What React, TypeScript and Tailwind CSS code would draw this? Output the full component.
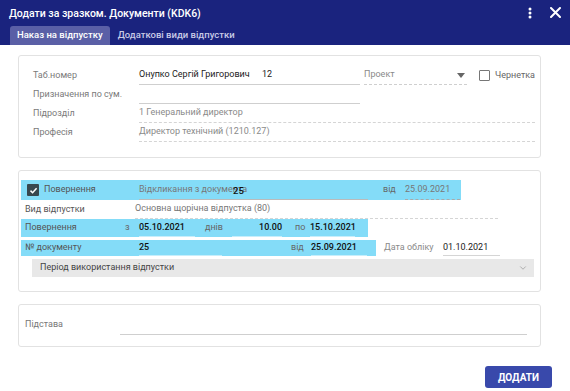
import { ChevronDown } from 'lucide-react'

const font = { fontFamily: 'Roboto, "Noto Sans", sans-serif' }

function Label({ children, w, className = '' }: { children: React.ReactNode; w: string; className?: string }) {
  return <div className={`${w} shrink-0 text-[9px] text-[#7a7a7a] ${className}`}>{children}</div>
}

export default function App() {
  return (
    <div className="w-[570px] h-[391px] bg-white overflow-hidden flex flex-col" style={font}>
      {/* шапка */}
      <div className="bg-[#1a237e] h-[45px] flex flex-col shrink-0">
        <div className="flex items-center h-[25px] pl-[9px] pr-[8px]">
          <div className="text-white text-[10.5px] font-medium flex-1 pt-[2px]">Додати за зразком. Документи (KDK6)</div>
          <svg width="4" height="12" viewBox="0 0 4 12" className="mr-[18px] mt-[1px]">
            <circle cx="2" cy="2" r="1.5" fill="white" />
            <circle cx="2" cy="6" r="1.5" fill="white" />
            <circle cx="2" cy="10" r="1.5" fill="white" />
          </svg>
          <svg width="11" height="11" viewBox="0 0 11 11" className="mr-[1px]">
            <path d="M1 1L10 10M10 1L1 10" stroke="white" strokeWidth="2" strokeLinecap="round" />
          </svg>
        </div>
        <div className="flex items-end h-[20px] pl-[10px]">
          <div className="h-[19px] px-[7px] flex items-center bg-[#5a5fa6] rounded-t-[3px] text-white text-[9.5px] font-medium">Наказ на відпустку</div>
          <div className="h-[19px] px-[8px] flex items-center text-[#c9cbe6] text-[9.5px] font-medium">Додаткові види відпустки</div>
        </div>
      </div>

      <div className="flex-1 flex flex-col px-[18px] pr-[29px] pt-[10px]">
        {/* картка 1 */}
        <div className="border border-[#e2e2e2] rounded-[3px] h-[103px] pt-[10px] pl-[14px] pr-[5px]">
          <div className="flex items-center h-[19px]">
            <Label w="w-[106px]">Таб.номер</Label>
            <div className="w-[221px] h-[19px] flex items-center border-b border-[#cfcfcf] text-[9px] text-[#222]">
              <span className="w-[123px] shrink-0">Онупко Сергій Григорович</span>
              <span>12</span>
            </div>
            <div className="ml-[4px] w-[103px] h-[19px] flex items-center border-b border-dashed border-[#cfcfcf] text-[9px] text-[#8a8a8a]">
              <span className="flex-1">Проект</span>
              <svg width="8" height="5" viewBox="0 0 8 5" className="mr-[2px]"><path d="M0 0H8L4 5Z" fill="#666" /></svg>
            </div>
            <div className="ml-[12px] w-[11px] h-[11px] border border-[#777] rounded-[1px]" />
            <span className="ml-[5px] text-[9px] text-[#666]">Чернетка</span>
          </div>
          <div className="flex items-center h-[19px]">
            <Label w="w-[106px]">Призначення по сум.</Label>
            <div className="w-[221px] h-[19px] border-b border-[#cfcfcf]" />
          </div>
          <div className="flex items-center h-[19px]">
            <Label w="w-[106px]">Підрозділ</Label>
            <div className="flex-1 h-[19px] flex items-center border-b border-dashed border-[#d5d5d5] text-[9px] text-[#8a8a8a]">1 Генеральний директор</div>
          </div>
          <div className="flex items-center h-[19px]">
            <Label w="w-[106px]">Професія</Label>
            <div className="flex-1 h-[19px] flex items-center border-b border-dashed border-[#d5d5d5] text-[9px] text-[#8a8a8a]">Директор технічний (1210.127)</div>
          </div>
        </div>

        {/* картка 2 */}
        <div className="mt-[12px] border border-[#e2e2e2] rounded-[3px] h-[122px] pt-[9px] pl-[2px] pr-[6px]">
          <div className="w-[440px] h-[20px] bg-[#84dcf8] flex items-center">
            <div className="ml-[6px] w-[12px] h-[12px] bg-[#37474f] rounded-[1px] flex items-center justify-center">
              <svg width="9" height="9" viewBox="0 0 9 9"><path d="M1.5 4.6L3.6 6.7L7.6 2.3" stroke="white" strokeWidth="1.5" fill="none" /></svg>
            </div>
            <Label w="w-[95px]" className="ml-[5px] text-[#555]">Повернення</Label>
            <div className="relative w-[229px] h-[20px] flex items-center border-b border-[#bbb] text-[9px] text-[#777] overflow-hidden whitespace-nowrap">
              Відкликання з документа
              <span className="absolute left-[94px] top-[4px] text-[9.5px] font-medium text-[#111]">25</span>
            </div>
            <Label w="w-[22px]" className="ml-[15px] text-[#666]">від</Label>
            <div className="w-[55px] h-[20px] flex items-center border-b border-dashed border-[#aaa] text-[9px] text-[#777]">25.09.2021</div>
          </div>
          <div className="flex items-center h-[19px]">
            <Label w="w-[114px]" className="pl-[4px] text-[#555]">Вид відпустки</Label>
            <div className="w-[363px] h-[19px] flex items-center border-b border-dashed border-[#d5d5d5] text-[9px] text-[#777]">Основна щорічна відпустка (80)</div>
          </div>
          <div className="w-[347px] h-[18px] bg-[#84dcf8] flex items-center text-[9px]">
            <Label w="w-[104px]" className="pl-[4px] text-[#555]">Повернення</Label>
            <span className="w-[14px] text-[#666]">з</span>
            <div className="w-[56px] h-[18px] flex items-center border-b border-[#c6eefb] font-medium text-[#111]">05.10.2021</div>
            <span className="ml-[10px] w-[27px] text-[#666]">днів</span>
            <div className="w-[50px] h-[18px] flex items-center justify-end border-b border-[#c6eefb] font-medium text-[#111]">10.00</div>
            <span className="ml-[13px] w-[15px] text-[#666]">по</span>
            <div className="w-[45px] h-[18px] flex items-center border-b border-[#c6eefb] font-medium text-[#111]">15.10.2021</div>
          </div>
          <div className="flex items-center mt-[3px] h-[16px] text-[9px]">
            <div className="w-[355px] h-[16px] bg-[#84dcf8] flex items-center">
              <Label w="w-[118px]" className="pl-[4px] text-[#555]">№ документу</Label>
              <div className="w-[83px] h-[16px] flex items-center border-b border-[#c6eefb] font-medium text-[#111]">25</div>
              <span className="ml-[69px] w-[20px] text-[#666]">від</span>
              <div className="w-[56px] h-[16px] flex items-center border-b border-[#c6eefb] font-medium text-[#111]">25.09.2021</div>
            </div>
            <span className="ml-[8px] w-[59px] text-[#8a8a8a]">Дата обліку</span>
            <div className="w-[57px] h-[16px] flex items-center border-b border-[#d5d5d5] text-[#222]">01.10.2021</div>
          </div>
          <div className="ml-[11px] mt-[3px] w-[502px] h-[18px] bg-[#e8e8e8] flex items-center pl-[8px] pr-[6px] text-[9px] text-[#444]">
            <span className="flex-1">Період використання відпустки</span>
            <ChevronDown size={10} strokeWidth={1.5} color="#888" />
          </div>
        </div>

        {/* картка 3 */}
        <div className="mt-[12px] border border-[#e2e2e2] rounded-[3px] h-[43px] flex items-center pl-[6px] pr-[13px]">
          <Label w="w-[95px]" className="text-[#777] mb-[2px]">Підстава</Label>
          <div className="flex-1 h-[15px] mt-[4px] border-b border-[#cfcfcf]" />
        </div>

        <div className="flex justify-end mt-[19px] -mr-[11px]">
          <div className="w-[67px] h-[22px] bg-[#3949ab] rounded-[3px] flex items-center justify-center text-white text-[10px] font-bold">ДОДАТИ</div>
        </div>
      </div>
    </div>
  )
}
